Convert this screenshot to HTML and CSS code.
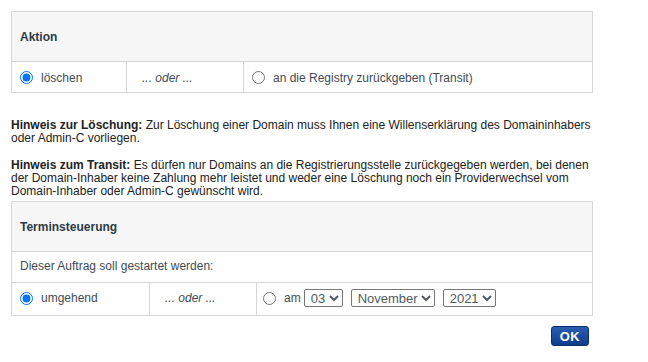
FILE: index.html
```html
<!DOCTYPE html>
<html lang="de">
<head>
    <meta charset="UTF-8">
    <title>Domain löschen</title>
    <link rel="stylesheet" href="styles.css">
</head>
<body>
    <div class="page">
        <!-- Aktion -->
        <table class="box action">
            <colgroup>
                <col class="c1">
                <col class="c2">
                <col>
            </colgroup>
            <tr>
                <th colspan="3">Aktion</th>
            </tr>
            <tr class="choice">
                <td><label><input type="radio" name="action" checked> löschen</label></td>
                <td class="or">... oder ...</td>
                <td><label><input type="radio" name="action"> an die Registry zurückgeben (Transit)</label></td>
            </tr>
        </table>

        <p class="note"><b>Hinweis zur Löschung:</b> Zur Löschung einer Domain muss Ihnen eine Willenserklärung des Domaininhabers oder Admin-C vorliegen.</p>
        <p class="note"><b>Hinweis zum Transit:</b> Es dürfen nur Domains an die Registrierungsstelle zurückgegeben werden, bei denen der Domain-Inhaber keine Zahlung mehr leistet und weder eine Löschung noch ein Providerwechsel vom Domain-Inhaber oder Admin-C gewünscht wird.</p>

        <!-- Terminsteuerung -->
        <table class="box schedule">
            <colgroup>
                <col class="c1">
                <col class="c2">
                <col>
            </colgroup>
            <tr>
                <th colspan="3">Terminsteuerung</th>
            </tr>
            <tr class="choice">
                <td colspan="3">Dieser Auftrag soll gestartet werden:</td>
            </tr>
            <tr class="choice dates">
                <td><label><input type="radio" name="start" checked> umgehend</label></td>
                <td class="or">... oder ...</td>
                <td>
                    <div class="date-pick">
                        <label><input type="radio" name="start"> am</label>
                        <select class="day"><option>03</option></select>
                        <select class="month"><option>November</option></select>
                        <select class="year"><option>2021</option></select>
                    </div>
                </td>
            </tr>
        </table>

        <div class="actions">
            <button type="button" class="btn-ok">OK</button>
        </div>
    </div>
</body>
</html>
```

FILE: styles.css
```css
* {
    box-sizing: border-box;
}

body {
    margin: 0;
    font-family: "Liberation Sans", Arial, sans-serif;
    font-size: 12px;
    color: #222;
    background: #fff;
}

.page {
    width: 600px;
    padding: 11px 0 0 11px;
}

/* Boxes */
.box {
    width: 582px;
    border-collapse: collapse;
    table-layout: fixed;
}

.box th,
.box td {
    border: 1px solid #d6d6d6;
    padding: 0 8px;
    text-align: left;
    vertical-align: middle;
    white-space: nowrap;
}

.box th {
    height: 50px;
    background: #f6f6f6;
    color: #2c3a46;
    font-weight: bold;
}

.box td {
    height: 31px;
    color: #414b55;
}

.action td {
    padding-top: 1px;
}

.schedule td {
    padding-bottom: 2px;
}

.action .c1 { width: 115px; }
.action .c2 { width: 117px; }
.schedule .c1 { width: 138px; }
.schedule .c2 { width: 107px; }

.schedule {
    margin-top: 3px;
}

.box .or {
    padding-left: 15px;
    font-style: italic;
}

.schedule .dates td {
    height: 33px;
}

.date-pick {
    display: flex;
    align-items: center;
    gap: 8px;
    margin-left: -2px;
}

label {
    display: inline-flex;
    align-items: center;
    vertical-align: middle;
}

input[type="radio"] {
    width: 13px;
    height: 13px;
    margin: 0 8px 0 0;
}

select {
    height: 18px;
    padding: 0 0 0 2px;
    font-family: "Liberation Sans", Arial, sans-serif;
    font-size: 13px;
    color: #4f5a64;
    border: 1px solid #767676;
    border-radius: 2px;
    background: #fff;
}

.day { margin-left: -5px; }

/* Notes */
.note {
    width: 590px;
    margin: 26px 0 0;
    line-height: 13px;
}

.note + .note {
    margin-top: 14px;
}

/* OK */
.actions {
    width: 578px;
    margin-top: 10px;
    text-align: right;
}

.btn-ok {
    width: 38px;
    height: 20px;
    padding: 0;
    border: 1px solid #0b2e6e;
    border-radius: 3px;
    background: linear-gradient(#2a5cb0, #0f3d8c);
    color: #fff;
    font-family: "Liberation Sans", Arial, sans-serif;
    font-size: 13px;
    font-weight: bold;
    letter-spacing: 0.5px;
}
```
